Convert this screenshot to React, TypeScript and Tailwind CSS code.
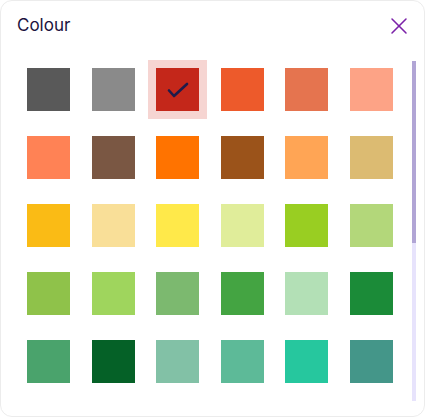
import { X } from "lucide-react";

const colours = [
  "#595959", "#8a8a8a", "#c4271a", "#ed5a2b", "#e5744f", "#fda386",
  "#ff8255", "#7a5743", "#ff7300", "#9b531a", "#ffa555", "#dcbb72",
  "#fabb15", "#f9df98", "#ffe94a", "#e0ed9a", "#99ce22", "#b3d77a",
  "#8fc24a", "#9fd55d", "#7cb96f", "#44a442", "#b3e0b6", "#1b8b38",
  "#4aa36c", "#056127", "#82c1a6", "#5dba98", "#26c79e", "#449689",
];

const SELECTED = 2;

const Swatch = ({ colour, selected }: { colour: string; selected: boolean }) => (
  <button
    className={`flex h-[43px] w-[43px] items-center justify-center ${
      selected ? "shadow-[0_0_0_8px_#f6d5d2]" : ""
    }`}
    style={{ backgroundColor: colour }}
  >
    {selected && (
      <svg width="22" height="16" viewBox="0 0 22 16" fill="none">
        <path
          d="M2 8.5 L7 14 L20 2"
          stroke="#1e1b4b"
          strokeWidth="2.6"
          strokeLinecap="round"
          strokeLinejoin="round"
        />
      </svg>
    )}
  </button>
);

export default function App() {
  return (
    <div className="h-[417px] w-[425px] bg-white" style={{ fontFamily: "Inter, 'Noto Sans', sans-serif" }}>
      <div className="flex h-full flex-col rounded-xl border border-[#ececec] bg-white">
        {/* header */}
        <div className="flex h-[50px] items-center justify-between pl-4 pr-[11px]">
          <h2 className="text-[17px] font-normal text-[#1c1440]">Colour</h2>
          <button className="text-[#7b22a8]">
            <X className="h-[28px] w-[28px]" strokeWidth={1.3} />
          </button>
        </div>

        {/* body */}
        <div className="flex flex-1">
          <div className="flex-1 pl-[26px] pt-[17px]">
            <div className="grid grid-cols-[repeat(6,43px)] gap-x-[21.5px] gap-y-[25px]">
              {colours.map((c, i) => (
                <Swatch key={c + i} colour={c} selected={i === SELECTED} />
              ))}
            </div>
          </div>
          {/* scrollbar */}
          <div className="mr-[8px] mt-[10px] flex h-[340px] w-[4px] flex-col bg-[#e7e3fc]">
            <div className="h-[182px] w-full bg-[#b1a5d5]" />
          </div>
        </div>
      </div>
    </div>
  );
}
